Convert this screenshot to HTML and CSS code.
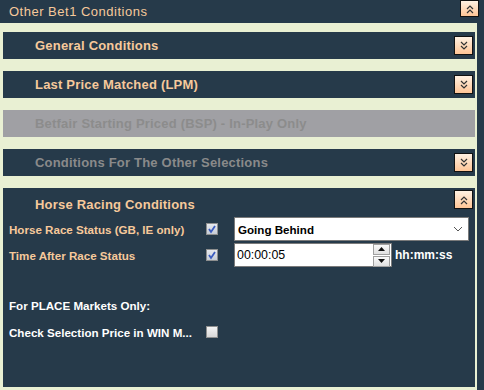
FILE: index.html
```html
<!DOCTYPE html>
<html lang="en">
<head>
  <meta charset="UTF-8">
  <title>Other Bet1 Conditions</title>
  <link rel="stylesheet" href="styles.css">
</head>
<body>
  <div class="top-bar">
    <span class="top-title">Other Bet1 Conditions</span>
    <button class="toggle top-toggle">
      <svg width="10" height="10" viewBox="0 0 10 10"><polyline points="2,5 5,2 8,5"/><polyline points="2,9 5,6 8,9"/></svg>
    </button>
  </div>

  <div class="frame">
    <div class="panel">
      <span class="panel-title">General Conditions</span>
      <button class="toggle">
        <svg width="10" height="10" viewBox="0 0 10 10"><polyline points="2,1 5,4 8,1"/><polyline points="2,5 5,8 8,5"/></svg>
      </button>
    </div>

    <div class="panel">
      <span class="panel-title">Last Price Matched (LPM)</span>
      <button class="toggle">
        <svg width="10" height="10" viewBox="0 0 10 10"><polyline points="2,1 5,4 8,1"/><polyline points="2,5 5,8 8,5"/></svg>
      </button>
    </div>

    <div class="panel disabled">
      <span class="panel-title">Betfair Starting Priced (BSP) - In-Play Only</span>
    </div>

    <div class="panel">
      <span class="panel-title muted">Conditions For The Other Selections</span>
      <button class="toggle">
        <svg width="10" height="10" viewBox="0 0 10 10"><polyline points="2,1 5,4 8,1"/><polyline points="2,5 5,8 8,5"/></svg>
      </button>
    </div>

    <!-- expanded section -->
    <div class="section">
      <div class="section-head">
        <span class="panel-title">Horse Racing Conditions</span>
        <button class="toggle">
          <svg width="10" height="10" viewBox="0 0 10 10"><polyline points="2,5 5,2 8,5"/><polyline points="2,9 5,6 8,9"/></svg>
        </button>
      </div>

      <div class="form-row">
        <span class="label">Horse Race Status (GB, IE only)</span>
        <span class="check checked">
          <svg width="10" height="10" viewBox="0 0 10 10"><polyline points="2,5 4,8 8,2"/></svg>
        </span>
        <div class="select">
          <span>Going Behind</span>
          <svg width="10" height="6" viewBox="0 0 10 6"><polyline points="1,1 5,5 9,1"/></svg>
        </div>
      </div>

      <div class="form-row">
        <span class="label">Time After Race Status</span>
        <span class="check checked">
          <svg width="10" height="10" viewBox="0 0 10 10"><polyline points="2,5 4,8 8,2"/></svg>
        </span>
        <div class="time-wrap">
          <div class="spinner">
            <span>00:00:05</span>
            <div class="spin-btns">
              <span class="spin-btn"><svg width="7" height="4" viewBox="0 0 7 4"><polygon points="0,4 3.5,0 7,4"/></svg></span>
              <span class="spin-btn"><svg width="7" height="4" viewBox="0 0 7 4"><polygon points="0,0 3.5,4 7,0"/></svg></span>
            </div>
          </div>
          <span class="unit">hh:mm:ss</span>
        </div>
      </div>

      <div class="note">For PLACE Markets Only:</div>

      <div class="form-row plain">
        <span class="label white">Check Selection Price in WIN M...</span>
        <span class="check"></span>
      </div>
    </div>
  </div>
</body>
</html>
```

FILE: styles.css
```css
body {
  margin: 0;
  background-color: #263a4a;
  font-family: "Liberation Sans", Arial, sans-serif;
  width: 484px;
  height: 390px;
  overflow: hidden;
}
.top-bar {
  height: 23px;
  display: flex;
  justify-content: space-between;
  align-items: flex-start;
  padding: 0 5px 0 9px;
}
.top-title {
  color: #f6c99b;
  font-size: 13px;
  letter-spacing: 0.5px;
  line-height: 23px;
}
.toggle {
  width: 19px;
  height: 19px;
  padding: 0;
  border: 1px solid #111;
  background: linear-gradient(#fff1e2, #ffc596);
  display: flex;
  align-items: center;
  justify-content: center;
  flex-shrink: 0;
}
.toggle svg polyline {
  fill: none;
  stroke: #333;
  stroke-width: 1.2;
}
.top-toggle {
  height: 17px;
}
.frame {
  width: 477px;
  height: 367px;
  box-sizing: border-box;
  background-color: #e9f0d3;
  padding: 9px 2px 0 3px;
  display: flex;
  flex-direction: column;
  gap: 12px;
}
.panel {
  height: 27px;
  background-color: #263a4a;
  display: flex;
  align-items: center;
  justify-content: space-between;
  padding: 0 2px 0 32px;
}
.panel-title {
  color: #f6c99b;
  font-size: 13px;
  font-weight: bold;
  letter-spacing: 0.2px;
}
.panel-title.muted {
  color: #8a8a8a;
}
.panel.disabled {
  background-color: #a0a0a4;
}
.panel.disabled .panel-title {
  color: #8c8c8c;
}
.section {
  height: 197px;
  background-color: #263a4a;
  padding: 2px 2px 0 6px;
}
.section-head {
  display: flex;
  justify-content: space-between;
  align-items: flex-start;
  height: 27px;
  padding-left: 26px;
}
.section-head .panel-title {
  margin-top: 7px;
}
.form-row {
  display: grid;
  grid-template-columns: 197px 28px 1fr;
  align-items: center;
  height: 24px;
  margin-bottom: 2px;
}
.form-row.plain {
  height: 20px;
}
.label {
  color: #f6c99b;
  font-size: 11.6px;
  font-weight: bold;
}
.label.white {
  color: #ffffff;
}
.check {
  width: 10px;
  height: 10px;
  border: 1px solid #8e8f8f;
  background: linear-gradient(#f4f4f4, #d8d8d8);
  display: flex;
  align-items: center;
  justify-content: center;
}
.check.checked {
  background: linear-gradient(#e6e9ee, #c5ccd6);
}
.check svg polyline {
  fill: none;
  stroke: #3a5bbf;
  stroke-width: 1.8;
}
.select {
  width: 235px;
  height: 24px;
  box-sizing: border-box;
  border: 1px solid #7a7a7a;
  background-color: #fff;
  display: flex;
  align-items: center;
  justify-content: space-between;
  padding: 0 5px 0 3px;
  font-size: 11.6px;
  font-weight: bold;
  color: #000;
}
.select svg polyline {
  fill: none;
  stroke: #555;
  stroke-width: 1;
}
.time-wrap {
  display: flex;
  align-items: center;
  gap: 3px;
}
.spinner {
  width: 158px;
  height: 24px;
  box-sizing: border-box;
  border: 1px solid #7a7a7a;
  background-color: #fff;
  display: flex;
  align-items: center;
  justify-content: space-between;
  padding: 0 1px 0 2px;
  font-size: 12.4px;
  color: #000;
}
.spin-btns {
  display: flex;
  flex-direction: column;
  gap: 1px;
}
.spin-btn {
  width: 15px;
  height: 9px;
  border: 1px solid #a0a0a0;
  background: linear-gradient(#fafafa, #e0e0e0);
  display: flex;
  align-items: center;
  justify-content: center;
}
.spin-btn svg polygon {
  fill: #111;
}
.unit {
  color: #fff;
  font-size: 12px;
  font-weight: bold;
}
.note {
  color: #fff;
  font-size: 11.6px;
  font-weight: bold;
  margin: 32px 0 10px;
}
```
